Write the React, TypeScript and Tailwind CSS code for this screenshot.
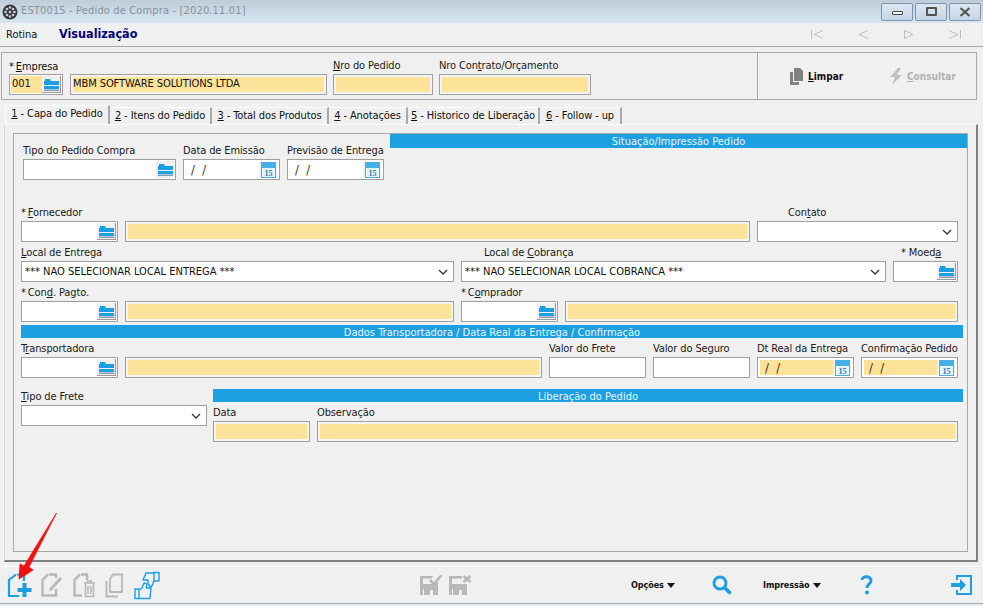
import React from "react";

const Folder = () => (
  <svg width="15" height="13" viewBox="0 0 15 13">
    <path d="M1 3 V1 H6 L7 3Z" fill="#1c9fe0" />
    <path d="M0 3 H15 V7 H0Z" fill="#1c9fe0" />
    <path d="M0 8 H15 V11 H0Z" fill="#1c9fe0" />
    <path d="M0 11.5 H15 V13 H0Z" fill="#7f9fb5" />
  </svg>
);
const Cal = () => (
  <svg width="15" height="16" viewBox="0 0 15 16">
    <rect x="0.5" y="0.5" width="14" height="15" fill="#e6f3fb" stroke="#45b0e8" />
    <rect x="0" y="0" width="15" height="6" fill="#45b0e8" />
    <text x="7.5" y="14" textAnchor="middle" fontSize="8" fontWeight="700" fill="#2a7fb5" fontFamily="Liberation Serif">15</text>
  </svg>
);
const Chevron = () => (
  <svg width="10" height="6" viewBox="0 0 10 6" className="shrink-0">
    <path d="M1 1 L5 5 L9 1" fill="none" stroke="#333" strokeWidth="1.3" />
  </svg>
);

const Box = ({ w, yellow, children, h = "h-[21px]" }: { w: string; yellow?: boolean; children?: React.ReactNode; h?: string }) => (
  <div className={`${w} ${h} shrink-0 border border-[#a0a0a0] p-[2px] flex items-stretch ${yellow ? "bg-[#f4f4f4]" : "bg-white"}`}>
    <div className={`flex-1 min-w-0 flex items-center text-[11px] text-[#111] ${yellow ? "bg-[#fde299]" : "bg-white"}`}>{children}</div>
  </div>
);

const Lookup = ({ w, yellow, value }: { w: string; yellow?: boolean; value?: string }) => (
  <div className={`${w} h-[21px] shrink-0 border border-[#a0a0a0] bg-white p-[1px] flex items-stretch`}>
    <div className={`flex-1 pl-[1px] flex items-center text-[11px] ${yellow ? "bg-[#fde299]" : ""}`}>{value}</div>
    <div className="w-[19px] bg-[#f0f0f0] border-r border-b border-[#9a9a9a] flex items-center justify-center"><Folder /></div>
  </div>
);

const DateBox = ({ w, yellow }: { w: string; yellow?: boolean }) => (
  <div className={`${w} h-[21px] shrink-0 border border-[#a0a0a0] bg-white p-[2px] flex items-stretch`}>
    <div className={`flex-1 pl-[5px] flex items-center text-[13px] text-[#4a3020] whitespace-pre ${yellow ? "bg-[#fde299]" : ""}`}>/  /</div>
    <div className="w-[18px] flex items-center justify-center bg-[#f0f0f0]"><Cal /></div>
  </div>
);

const SelectBox = ({ w, text }: { w: string; text?: string }) => (
  <div className={`${w} h-[21px] shrink-0 border border-[#a0a0a0] bg-white pl-[3px] pr-[5px] flex items-center justify-between text-[11px] text-[#111]`}>
    <span className="whitespace-nowrap pt-[1px]">{text}</span>
    <Chevron />
  </div>
);

const Field = ({ label, star, children, w }: { label?: React.ReactNode; star?: boolean; children: React.ReactNode; w: string }) => (
  <div className={`${w} shrink-0 flex flex-col`}>
    <div className="h-[16px] text-[11px] leading-[16px] tracking-[-0.12px] text-[#1a1a1a] whitespace-nowrap">
      {star && <span className="mr-[2px]">*</span>}
      {label}
    </div>
    {children}
  </div>
);

const Bar = ({ children, className }: { children: React.ReactNode; className?: string }) => (
  <div className={`bg-[#1ca0e2] text-[#e8f4fc] text-[11px] leading-[15px] text-center ${className ?? ""}`}>{children}</div>
);

const Tab = ({ w, n, text, active }: { w: string; n: string; text: string; active?: boolean }) => (
  <div className={`${w} shrink-0 flex items-center justify-center whitespace-nowrap text-[11px] tracking-[-0.1px] text-[#111] bg-[#f0f0f0] border-t border-white border-r-2 border-r-[#a8a8a8] ${active ? "h-[19px] border-l pb-[2px]" : "h-[17px] pt-[1px]"}`}>
    <u>{n}</u>&nbsp;- {text}
  </div>
);

const Nav = ({ d, w }: { d: string; w: number }) => (
  <svg width={w} height="9" viewBox={`0 0 ${w} 9`}><path d={d} fill="none" stroke="#bdbdbd" /></svg>
);

const WinBtn = ({ children }: { children: React.ReactNode }) => (
  <div className="w-[32px] h-[18px] rounded-[2px] border border-[#8093ab] bg-gradient-to-b from-[#dce7f1] to-[#c6d6e6] flex items-center justify-center">{children}</div>
);

const G = "#b8b8b8";
const B = "#1c9fe2";

export default function App() {
  return (
    <div className="relative w-[983px] h-[606px] overflow-hidden bg-[#f0f0f0] flex flex-col font-['DejaVu_Sans_Condensed','Liberation_Sans',sans-serif] text-[#111]">
      {/* Title bar */}
      <div className="h-[23px] shrink-0 bg-gradient-to-b from-[#bfccd9] to-[#d8e6f3] flex items-center pl-[2px] pr-[2px]">
        <svg width="16" height="16" viewBox="0 0 16 16">
          <circle cx="8" cy="8" r="7.5" fill="#3a3a3e" />
          {[[8,3.5],[8,12.5],[3.5,8],[12.5,8],[5,5],[11,5],[5,11],[11,11],[8,8]].map(([x,y],i)=><circle key={i} cx={x} cy={y} r="1.3" fill="#c8c8d0" />)}
        </svg>
        <span className="ml-[3px] text-[11px] tracking-[0.15px] text-[#87929c]">EST0015 - Pedido de Compra - [2020.11.01]</span>
        <div className="ml-auto flex gap-[2px]">
          <WinBtn><div className="w-[11px] h-[4px] border border-[#444] bg-white rounded-[1px] mt-[3px]" /></WinBtn>
          <WinBtn><div className="w-[11px] h-[9px] border-2 border-[#555] rounded-[1px]" /></WinBtn>
          <WinBtn><svg width="12" height="10" viewBox="0 0 12 10"><path d="M1.5 1 L10.5 9 M10.5 1 L1.5 9" stroke="#555" strokeWidth="2.2" /></svg></WinBtn>
        </div>
      </div>
      {/* Menu */}
      <div className="h-[24px] shrink-0 border-b border-[#a8a8a8] flex items-center">
        <span className="ml-[6px] w-[53px] pt-[1px] text-[11px]">Rotina</span>
        <span className="text-[12.5px] font-bold text-[#00007a]">Visualização</span>
        <div className="ml-auto mr-[22px] flex items-center">
          <Nav w={12} d="M0.5 0 V9 M12 0.5 L3 4.5 L12 8.5" />
          <div className="w-[35px]" />
          <Nav w={10} d="M10 0.5 L1 4.5 L10 8.5" />
          <div className="w-[36px]" />
          <Nav w={10} d="M0.5 0.5 L9 4.5 L0.5 8.5Z" />
          <div className="w-[35px]" />
          <Nav w={12} d="M11.5 0 V9 M0 0.5 L9 4.5 L0 8.5" />
        </div>
      </div>
      {/* Header panel */}
      <div className="mt-[5px] ml-[1px] w-[976px] h-[48px] shrink-0 border border-[#a8a8a8] flex">
        <div className="w-[755px] pl-[7px] pt-[5px] flex gap-[6px]">
          <div className="flex flex-col">
            <div className="h-[16px] text-[11px] leading-[17px] tracking-[-0.12px] whitespace-nowrap"><span className="mr-[2px]">*</span><u>E</u>mpresa</div>
            <div className="flex gap-[7px]">
              <Lookup w="w-[54px]" yellow value="001" />
              <Box w="w-[257px]" yellow><span className="text-[11px] tracking-[-0.08px] whitespace-nowrap">MBM SOFTWARE SOLUTIONS LTDA</span></Box>
            </div>
          </div>
          <Field w="w-[100px]" label={<><u>N</u>ro do Pedido</>}><Box w="w-[100px]" yellow /></Field>
          <Field w="w-[152px]" label={<>Nro Con<u>t</u>rato/Orçamento</>}><Box w="w-[152px]" yellow /></Field>
        </div>
        <div className="flex-1 border-l border-[#a8a8a8] flex items-center pl-[32px]">
          <svg width="13" height="17" viewBox="0 0 13 17"><path d="M4 0 H10 L13 3 V13 H4Z" fill="#808080" /><path d="M0 4 H3 V14 H9 V17 H0Z" fill="#808080" /></svg>
          <span className="ml-[5px] w-[36px] text-[10px] font-bold text-[#111]"><u>L</u>impar</span>
          <svg className="ml-[45px]" width="13" height="17" viewBox="0 0 13 17"><path d="M9 0 L1 9 H6 L3 17 L13 7 H8 L12 0Z" fill="#c0c0c0" /></svg>
          <span className="ml-[5px] text-[10px] font-bold text-[#b0b0b0]"><u>C</u>onsultar</span>
        </div>
      </div>
      {/* Tabs */}
      <div className="mt-[5px] ml-[5px] h-[19px] shrink-0 flex items-end relative z-10">
        <Tab w="w-[105px]" n="1" text="Capa do Pedido" active />
        <Tab w="w-[102px]" n="2" text="Itens do Pedido" />
        <Tab w="w-[117px]" n="3" text="Total dos Produtos" />
        <Tab w="w-[79px]" n="4" text="Anotações" />
        <Tab w="w-[132px]" n="5" text="Historico de Liberação" />
        <Tab w="w-[82px]" n="6" text="Follow - up" />
      </div>
      {/* Main panel */}
      <div className="ml-[4px] w-[974px] h-[438px] shrink-0 border-l border-l-[#d8d8d8] border-t border-white border-r-2 border-b-2 border-r-[#808080] border-b-[#808080] pl-[8px] pt-[8px]">
        <div className="w-[955px] h-[419px] border border-[#a8a8a8] pl-[7px] pr-[4px]">
          {/* Row 1 */}
          <div className="flex h-[46px] pl-[2px]">
            <div className="flex gap-[7px] pt-[9px]">
              <Field w="w-[153px]" label="Tipo do Pedido Compra">
                <div className="w-[153px] h-[21px] border border-[#a0a0a0] bg-white flex justify-end items-center pr-[1px]"><div className="w-[18px] h-[17px] bg-[#f0f0f0] flex items-center justify-center"><Folder /></div></div>
              </Field>
              <Field w="w-[97px]" label="Data de Emissão"><DateBox w="w-[97px]" /></Field>
              <Field w="w-[97px]" label="Previsão de Entrega"><DateBox w="w-[97px]" /></Field>
            </div>
            <Bar className="ml-[6px] w-[577px] h-[14px] mr-[-5px]">Situação/Impressão Pedido</Bar>
          </div>
          {/* Row 2 */}
          <div className="mt-[25px] flex gap-[7px]">
            <Field w="w-[97px]" star label={<><u>F</u>ornecedor</>}><Lookup w="w-[97px]" /></Field>
            <Field w="w-[625px]"><Box w="w-[625px]" yellow /></Field>
            <Field w="w-[201px]" label={<span className="pl-[31px]">Con<u>t</u>ato</span>}><SelectBox w="w-[201px]" /></Field>
          </div>
          {/* Row 3 */}
          <div className="mt-[3px] flex gap-[7px]">
            <Field w="w-[433px]" label={<><u>L</u>ocal de Entrega</>}><SelectBox w="w-[433px]" text="*** NAO SELECIONAR LOCAL ENTREGA ***" /></Field>
            <Field w="w-[425px]" label={<span className="pl-[23px]">Local de <u>C</u>obrança</span>}><SelectBox w="w-[425px]" text="*** NAO SELECIONAR LOCAL COBRANCA ***" /></Field>
            <Field w="w-[65px]" label={<span className="pl-[8px]">* Moed<u>a</u></span>}><Lookup w="w-[65px]" /></Field>
          </div>
          {/* Row 4 */}
          <div className="mt-[3px] flex gap-[7px]">
            <Field w="w-[97px]" star label={<>Con<u>d</u>. Pagto.</>}><Lookup w="w-[97px]" /></Field>
            <Field w="w-[329px]"><Box w="w-[329px]" yellow /></Field>
            <Field w="w-[97px]" star label={<>C<u>o</u>mprador</>}><Lookup w="w-[97px]" /></Field>
            <Field w="w-[393px]"><Box w="w-[393px]" yellow /></Field>
          </div>
          <Bar className="mt-[3px] h-[13px]">Dados Transportadora / Data Real da Entrega / Confirmação</Bar>
          {/* Row 5 */}
          <div className="mt-[3px] flex gap-[7px]">
            <Field w="w-[97px]" label={<>T<u>r</u>ansportadora</>}><Lookup w="w-[97px]" /></Field>
            <Field w="w-[417px]"><Box w="w-[417px]" yellow /></Field>
            <Field w="w-[97px]" label="Valor do Frete"><Box w="w-[97px]" /></Field>
            <Field w="w-[97px]" label="Valor do Seguro"><Box w="w-[97px]" /></Field>
            <Field w="w-[97px]" label="Dt Real da Entrega"><DateBox w="w-[97px]" yellow /></Field>
            <Field w="w-[97px]" label="Confirmação Pedido"><DateBox w="w-[97px]" yellow /></Field>
          </div>
          {/* Row 6 */}
          <div className="mt-[11px] flex gap-[6px]">
            <Field w="w-[186px]" label={<><u>T</u>ipo de Frete</>}><SelectBox w="w-[186px]" /></Field>
            <div className="flex-1 flex flex-col">
              <Bar className="h-[13px]">Liberação do Pedido</Bar>
              <div className="mt-[3px] flex gap-[7px]">
                <Field w="w-[97px]" label="Data"><Box w="w-[97px]" yellow /></Field>
                <Field w="w-[641px]" label={<>Observação</>}><Box w="w-[641px]" yellow /></Field>
              </div>
            </div>
          </div>
        </div>
      </div>
      {/* Bottom toolbar */}
      <div className="mt-[4px] h-[38px] shrink-0 border-t border-white border-b border-b-[#a8a8a8] flex items-center relative">
        <div className="ml-[7px] flex items-center gap-[9px]">
          <svg width="25" height="25" viewBox="0 0 25 25"><path d="M10 1.5 H17 V8 M9 1.5 L2 7 V23 H12" fill="none" stroke={B} strokeWidth="2.2" /><path d="M15.5 10 H19.5 V15 H24.5 V19 H19.5 V24 H15.5 V19 H10.5 V15 H15.5Z" fill={B} /></svg>
          <svg width="23" height="25" viewBox="0 0 23 25"><path d="M8 1.5 H15 V5 M7 1.5 L1.5 7 V22.5 H15 V16" fill="none" stroke={G} strokeWidth="2.4" /><path d="M21 6 L11 17 L8 19 L9 15 L19 4Z" fill={G} /></svg>
          <svg width="23" height="25" viewBox="0 0 23 25"><path d="M8 1.5 H14 V7 M7 1.5 L1.5 7 V22.5 H9" fill="none" stroke={G} strokeWidth="2.4" /><path d="M11 10 H22 M12.5 11 V23.5 H20.5 V11 M15 13 V21 M18 13 V21 M14.5 10 V8 H18.5 V10" fill="none" stroke={G} strokeWidth="1.6" /></svg>
          <svg width="18" height="25" viewBox="0 0 18 25"><path d="M8 1.5 H17 V19 H5 V6Z" fill="none" stroke={G} strokeWidth="1.8" /><path d="M1.5 8 V23.5 H13" fill="none" stroke={G} strokeWidth="2" /></svg>
          <svg className="ml-[2px]" width="26" height="29" viewBox="0 0 26 29"><g fill="none" stroke={B} strokeWidth="1.4" strokeLinejoin="round"><path d="M20 1.5 H25 V10 H20Z" /><path d="M20 2 H12 L9 9 H14 V12 L16 16 L18 15 L20 10" /><path d="M1 18 H5 V27.5 H1Z" /><path d="M5 19 L8 17 L10 12 L13 13 L12.5 17 H17 L16 27.5 H5" /></g></svg>
        </div>
        <div className="absolute left-[420px] top-[8px] flex gap-[6px]">
          <svg width="23" height="20" viewBox="0 0 23 20"><path d="M0 1 H13 L11.5 3.5 H3 V9 H15 L18 6 V20 H13 V15 H10 V20 H4 V14 H5 H3 V20 H0Z" fill={G} /><path d="M10 5 L14 9 L21.5 0" fill="none" stroke={G} strokeWidth="2.5" /></svg>
          <svg width="23" height="20" viewBox="0 0 23 20"><path d="M0 1 H13 V3.5 H3 V9 H18 V20 H13 V15 H10 V20 H4 V14 H3 V20 H0Z" fill={G} /><path d="M14.5 1 L21.5 7 M21.5 1 L14.5 7" stroke={G} strokeWidth="2.8" /></svg>
        </div>
        <div className="absolute left-[631px] top-[12px] flex items-center gap-[3px] text-[9px] font-bold tracking-[-0.1px]"><span>Opções</span><svg width="8" height="5" viewBox="0 0 8 5"><path d="M0 0 H8 L4 5Z" fill="#111" /></svg></div>
        <svg className="absolute left-[712px] top-[8px]" width="20" height="20" viewBox="0 0 20 20"><circle cx="8" cy="8" r="6" fill="none" stroke={B} strokeWidth="3" /><path d="M12 12 L18.5 18.5" stroke={B} strokeWidth="3.5" /></svg>
        <div className="absolute left-[763px] top-[12px] flex items-center gap-[3px] text-[9px] font-bold tracking-[-0.1px]"><span>Impressão</span><svg width="8" height="5" viewBox="0 0 8 5"><path d="M0 0 H8 L4 5Z" fill="#111" /></svg></div>
        <svg className="absolute left-[860px] top-[8px]" width="13" height="20" viewBox="0 0 13 20"><path d="M2 5 C2 0.5 11 0.5 11 5.5 C11 9 7 9 7 13" fill="none" stroke={B} strokeWidth="3" /><circle cx="7" cy="17.5" r="2" fill={B} /></svg>
        <svg className="absolute left-[951px] top-[8px]" width="21" height="20" viewBox="0 0 21 20"><path d="M6 5 V1 H20 V19 H6 V15" fill="none" stroke={B} strokeWidth="2" /><path d="M0 8 H9 V4 L15 10 L9 16 V12 H0Z" fill={B} /></svg>
      </div>
      <div className="h-[3px] bg-[#e3eef7]" />
      {/* Red arrow annotation */}
      <svg className="absolute left-0 top-[505px]" width="70" height="80" viewBox="0 0 70 80">
        <path d="M56.5 8 L29 62 L33 65 L19 74 L20 59 L24 61 Z" fill="#f01010" stroke="#f01010" strokeWidth="0.8" strokeLinejoin="round" />
      </svg>
    </div>
  );
}
